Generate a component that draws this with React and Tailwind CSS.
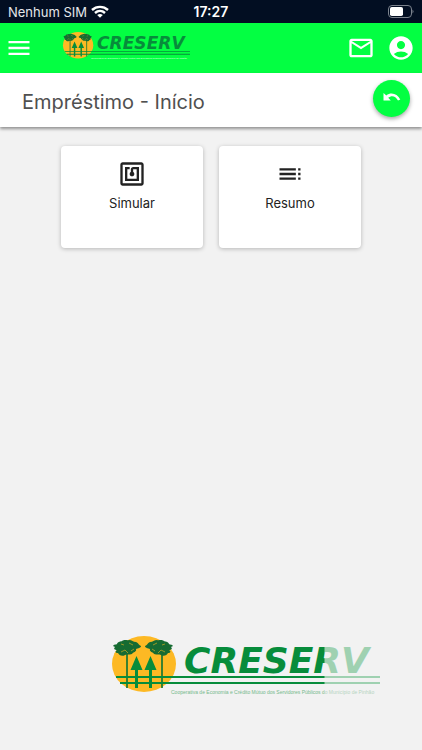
import React, { useId } from "react";
import { MdMenu, MdMailOutline, MdAccountCircle, MdNfc, MdToc } from "react-icons/md";

function Canopy({ x, y, flip }) {
  return (
    <g transform={`translate(${x} ${y})${flip ? " scale(-1 1)" : ""}`} fill="#166b32">
      <path d="M-14 -3 C-13 -5 -11 -4 -10 -5 C-9 -8 -6 -7 -5 -8 C-2 -10 0 -8 2 -9 C5 -9 6 -7 9 -7 C12 -6 11 -4 14 -3 C14 -1 11 -1 9 0 C10 3 6 3 5 5 C2 6 0 5 -2 6 C-5 8 -8 6 -9 4 C-12 4 -12 2 -10 1 C-12 1 -14 0 -12 -2 Z" />
      <path d="M-6 -5 L-3 -4 M2 -6 L6 -4 M-6 3 L-2 1 L1 4 M4 2 L7 0" stroke="#b8a524" strokeWidth="0.800" fill="none" />
    </g>
  );
}

function Logo({ className, faded, caption }) {
  const id = useId();
  const split = faded ? 214 : 272;
  const caps = `${id}caps`;
  const small = `${id}small`;
  return (
    <svg viewBox="0 0 270 62" className={className} role="img" aria-label="Creserv">
      <defs>
        <linearGradient id={caps} gradientUnits="userSpaceOnUse" x1={split} x2={split + 1} y1="0" y2="0">
          <stop offset="0" stopColor="#078c3b" />
          <stop offset="1" stopColor="#9fd1b1" />
        </linearGradient>
        <linearGradient id={small} gradientUnits="userSpaceOnUse" x1={split} x2={split + 1} y1="0" y2="0">
          <stop offset="0" stopColor={caption} />
          <stop offset="1" stopColor="#b5d3bf" />
        </linearGradient>
      </defs>
      <ellipse cx="34" cy="30" rx="32" ry="28" fill="#fdb924" />
      <path d="M17 18V54M52 18V54" stroke="#267b32" strokeWidth="1.800" />
      <Canopy x={17} y={15} />
      <Canopy x={49} y={15} flip />
      <path d="M26.500 22L32.500 36H28V54H25V36H20.500ZM40.500 22L46.500 36H42V54H39V36H34.500Z" fill="#078c3b" />
      <path d="M6 42H270V44H6ZM10 48H270V50H10Z" fill={`url(#${caps})`} />
      <text x="74" y="39" fontFamily="'DejaVu Sans', sans-serif" fontSize="36" fontWeight="700" fontStyle="italic" fill={`url(#${caps})`}>
        CRESERV
      </text>
      <text x="61" y="60" fontFamily="'Liberation Sans Narrow', 'Liberation Sans', sans-serif" fontSize="5" fill={`url(#${small})`}>
        Cooperativa de Economia e Crédito Mútuo dos Servidores Públicos do Município de Pinhão
      </text>
    </svg>
  );
}

function StatusBar() {
  return (
    <div className="grid h-[23px] grid-cols-3 items-center bg-[#020e22] px-2 text-[13px] leading-5 text-[#e4e7ea]">
      <div className="flex items-center gap-1 whitespace-nowrap">
        <span>Nenhum SIM</span>
        <svg viewBox="0 0 18 13" className="h-[13px] w-[18px]" fill="none" stroke="white" strokeWidth="2.400" aria-label="Wi-Fi">
          <path d="M1 5C5.500 0.800 12.500 0.800 17 5M4 8C7 5.200 11 5.200 14 8" />
          <path d="M6.200 10Q9 7.800 11.800 10L9 12.800Z" fill="white" stroke="none" />
        </svg>
      </div>
      <span className="text-center text-sm font-semibold text-white">17:27</span>
      <svg viewBox="0 0 27 13" className="h-[13px] w-[27px] justify-self-end" aria-label="Bateria">
        <rect x="1.500" y="0.500" width="23" height="12" rx="3.500" fill="none" stroke="#7b828d" />
        <rect x="3" y="2" width="13" height="9" rx="1.800" fill="white" />
        <path d="M25.500 4.500Q27.500 6.500 25.500 8.500Z" fill="#7b828d" />
      </svg>
    </div>
  );
}

function Card({ icon: Icon, label }) {
  return (
    <button type="button" className="flex h-[102px] flex-col items-center gap-[5px] rounded bg-white pt-[14px] text-[13px] leading-5 text-[#222] shadow-[0_1px_4px_rgba(0,0,0,0.25)]">
      <Icon className="size-7" />
      <span>{label}</span>
    </button>
  );
}

export default function App() {
  return (
    <div className="flex min-h-screen flex-col bg-[#f2f2f2] font-['Inter',sans-serif]">
      <StatusBar />
      <header className="flex h-[50px] items-center bg-[#03ff42] pl-[5px] pr-[7px] text-white">
        <button type="button" aria-label="Menu">
          <MdMenu className="size-7" />
        </button>
        <Logo className="mb-1 ml-[29px] w-32" caption="#e6ffed" />
        <div className="ml-auto flex items-center gap-3">
          <button type="button" aria-label="Mensagens">
            <MdMailOutline className="size-7" />
          </button>
          <button type="button" aria-label="Conta">
            <MdAccountCircle className="size-7" />
          </button>
        </div>
      </header>
      <div className="flex h-[54px] items-start justify-between bg-white pl-[22px] pr-3 pt-[7px] shadow-[0_2px_3px_rgba(0,0,0,0.4)]">
        <h1 className="pt-2 text-xl leading-7 text-[#505050]">Empréstimo - Início</h1>
        <button type="button" aria-label="Voltar" className="flex size-[37px] items-center justify-center rounded-full bg-[#03ff42] pb-1 text-white shadow-[0_2px_4px_rgba(0,0,0,0.35)]">
          <svg viewBox="0 0 20 20" className="size-5" fill="currentColor">
            <path d="M1.500 6L4.300 8.500C8.700 4.800 15.300 6.300 18.300 12.500L16 13.400C13.500 8.700 9.500 8 6.200 10.700L8.800 13.400H1.500Z" />
          </svg>
        </button>
      </div>
      <main className="flex flex-1 flex-col">
        <div className="grid grid-cols-2 gap-4 px-[61px] pt-[19px]">
          <Card icon={MdNfc} label="Simular" />
          <Card icon={MdToc} label="Resumo" />
        </div>
        <Logo className="mb-[54px] mr-[42px] mt-auto w-[270px] self-end" faded caption="#75b98c" />
      </main>
    </div>
  );
}
